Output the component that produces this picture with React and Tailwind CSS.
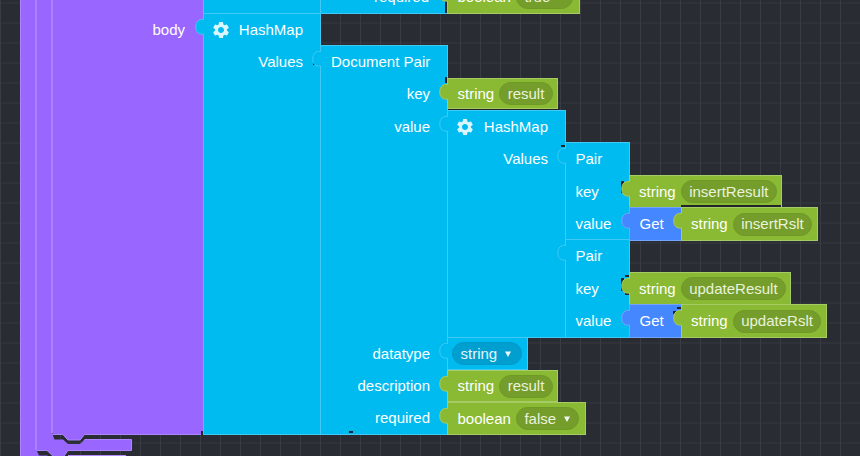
import React from "react";
import { MdSettings } from "react-icons/md";

const FILLS = {
  cyan: "bg-[#00bbf0] border-[#3fc9f4]",
  green: "bg-[#8ab933] border-[#a6ca64]",
  blue: "bg-[#4587ff] border-[#73a5ff]",
};

const TABS = {
  cyan: ["#00bbf0", "#3fc9f4"],
  green: ["#8ab933", "#a6ca64"],
  blue: ["#4587ff", "#73a5ff"],
};

// Output connector protruding from the left edge of a block
function Tab({ color }) {
  const [fill, stroke] = TABS[color];
  return (
    <svg className="absolute -left-[9px] top-1 h-[18px] w-[11px]" viewBox="0 0 11 18">
      <path d="M11 1.5H9C4 0.5 0.8 3.5 0.8 9S4 17 9 16H11Z" fill={fill} />
      <path d="M8.5 0V1.5C4 0.8 0.8 3.5 0.8 9S4 16.6 8.5 16V18" fill="none" stroke={stroke} />
    </svg>
  );
}

function Block({ color, at, tab = true, children }) {
  return (
    <div className={`absolute border ${FILLS[color]} ${at}`}>
      {tab && <Tab color={color} />}
      {children}
    </div>
  );
}

function Head({ children }) {
  return (
    <div className="flex h-8 items-center justify-between pl-[7px] pr-[17px]">
      <MdSettings className="size-5 text-[#d9f5fd]" />
      <span>{children}</span>
    </div>
  );
}

function Input({ children, className = "h-8" }) {
  return <div className={`flex justify-end pr-[17px] pt-[6px] ${className}`}>{children}</div>;
}

function Value({ type, children, dropdown = false, pad = "pl-[9.5px]" }) {
  return (
    <div className={`flex h-full items-center gap-[5px] whitespace-nowrap ${pad}`}>
      <span>{type}</span>
      <span className="flex h-[23px] items-center rounded-full border border-[#6f9927] bg-[#749d2b] px-[7.5px] text-[#eaf2dc]">
        {children}
        {dropdown && <Caret />}
      </span>
    </div>
  );
}

function Caret() {
  return (
    <svg className="ml-[7.5px] mr-px h-[6px] w-[6px]" viewBox="0 0 6 6">
      <path d="M0 0.5H6L3 6Z" fill="#eef6f8" />
    </svg>
  );
}

function Pair({ at }) {
  return (
    <Block color="cyan" at={at}>
      <div className="flex h-full flex-col pl-[9.5px] pt-[6px]">
        <span className="h-[33px] shrink-0">Pair</span>
        <span className="h-8 shrink-0">key</span>
        <span className="shrink-0">value</span>
      </div>
    </Block>
  );
}

function Get({ at }) {
  return (
    <Block color="blue" at={at}>
      <div className="flex h-full items-center pl-[9.5px]">Get</div>
    </Block>
  );
}

function Gap({ at }) {
  return <div className={`absolute bg-[#20242b] ${at}`} />;
}

export default function App() {
  return (
    <div className="relative h-[456px] w-[860px] overflow-hidden bg-[#2a2c34] font-['Liberation_Sans',Arial,sans-serif] text-[15px] leading-5 text-white">
      <div className="absolute inset-0 bg-[linear-gradient(to_bottom,#30323a_2px,transparent_2px)] bg-[size:20px_20px] bg-[position:0_2px]" />
      <div className="absolute inset-0 bg-[linear-gradient(to_right,#3a3c43_1px,transparent_1px)] bg-[size:20px_20px]" />

      {/* Nested statement blocks and their closing arms */}
      <svg className="absolute left-0 top-0 h-[456px] w-[204px]" viewBox="0 0 204 456">
        <path d="M20 0H204V434.5H84.5L80 440H68L63 435H55L52 433L54.5 439.5H63L68 444H80L84.5 439.5H131.5V450.5H68L64 456H20Z" fill="#9966ff" />
        <path d="M36.500 450L39 455.500H47L48 456H53L47 450.500Z" fill="#282b31" />
        <path d="M68 455.500H126" stroke="#b38cff" />
        <path d="M20.500 0V456M51.500 0V433M52 434.500H63L68 440H80L84.500 434.500H203M84.500 439.500H131.500V450.500H68L64 456M36.500 450.500H47L53 456" fill="none" stroke="#ad85ff" />
        <path d="M36 0V450M52 0V433" stroke="#ad80ff" strokeWidth="2" />
      </svg>
      <span className="absolute left-[152.500px] top-5">body</span>

      <Block color="cyan" at="left-[203px] -top-5 h-[34px] w-[118px]" tab={false} />
      <Block color="cyan" at="left-[320px] -top-5 h-[34px] w-[127px]" tab={false}>
        <Input className="h-8">required</Input>
      </Block>
      <Gap at="left-[445px] top-0 h-[13px] w-[2px]" />
      <Block color="green" at="left-[447px] -top-[20px] h-[34px] w-[133px]">
        <Value type="boolean" dropdown>true</Value>
      </Block>

      <Block color="cyan" at="left-[203px] top-[13px] h-[422px] w-[118px]">
        <Head>HashMap</Head>
        <Input>Values</Input>
      </Block>
      <Gap at="left-[313px] top-[63px] h-[2px] w-[3px]" />

      <Block color="cyan" at="left-[320px] top-[45px] h-[390px] w-[128px]">
        <div className="flex h-8 items-center pl-[10px]">Document Pair</div>
        <Input className="h-[33px]">key</Input>
        <Input className="h-[227px]">value</Input>
        <Input>datatype</Input>
        <Input>description</Input>
        <Input>required</Input>
      </Block>
      <Gap at="left-[445px] top-[77px] h-[6px] w-[2px]" />
      <Gap at="left-[349px] top-[431px] h-[2px] w-[4px]" />
      <Gap at="left-[201px] top-[431px] h-[4px] w-[2px]" />

      <Block color="green" at="left-[447px] top-[78px] h-[31px] w-[111px]">
        <Value type="string">result</Value>
      </Block>
      <Gap at="left-[448px] top-[109px] h-[1px] w-[110px]" />

      <Block color="cyan" at="left-[447px] top-[110px] h-[228px] w-[119px]">
        <Head>HashMap</Head>
        <Input>Values</Input>
      </Block>
      <Gap at="left-[561px] top-[145px] h-[2px] w-[4px]" />

      <Pair at="left-[565px] top-[142px] h-[98px] w-[65px]" />
      <Pair at="left-[565px] top-[239px] h-[99px] w-[65px]" />
      <Gap at="left-[621px] top-[181px] h-[12px] w-[3px]" />
      <Gap at="left-[621px] top-[278px] h-[13px] w-[3px]" />
      <Gap at="left-[625px] top-[275px] h-[2px] w-[4px]" />
      <Gap at="left-[625px] top-[293px] h-[2px] w-[4px]" />

      <Block color="green" at="left-[629px] top-[175px] h-[33px] w-[153px]">
        <Value type="string" pad="pl-[9px]">insertResult</Value>
      </Block>
      <Get at="left-[629px] top-[207px] h-[34px] w-[53px]" />
      <Gap at="left-[681px] top-[205px] h-[2px] w-[100px]" />
      <Block color="green" at="left-[681px] top-[207px] h-[34px] w-[137px]">
        <Value type="string" pad="pl-[9px]">insertRslt</Value>
      </Block>

      <Block color="green" at="left-[629px] top-[272px] h-[33px] w-[162px]">
        <Value type="string" pad="pl-[9px]">updateResult</Value>
      </Block>
      <Get at="left-[629px] top-[304px] h-[34px] w-[53px]" />
      <Gap at="left-[677px] top-[307px] h-[2px] w-[4px]" />
      <Gap at="left-[673px] top-[311px] h-[3px] w-[3px]" />
      <Block color="green" at="left-[681px] top-[304px] h-[34px] w-[146px]">
        <Value type="string" pad="pl-[9px]">updateRslt</Value>
      </Block>

      <Block color="cyan" at="left-[447px] top-[337px] h-[33px] w-[81px]">
        <div className="flex h-full items-center pl-1">
          <span className="flex h-[23px] items-center rounded-full border border-[#0099c8] bg-[#009fcf] pl-[7.5px] pr-[9.5px] text-[#e3f5fb]">
            string
            <Caret />
          </span>
        </div>
      </Block>
      <Gap at="left-[449px] top-[370px] h-[1px] w-[80px]" />
      <Block color="green" at="left-[447px] top-[370px] h-[32px] w-[111px]">
        <Value type="string">result</Value>
      </Block>
      <Block color="green" at="left-[447px] top-[402px] h-[33px] w-[139px]">
        <Value type="boolean" dropdown>false</Value>
      </Block>
    </div>
  );
}
